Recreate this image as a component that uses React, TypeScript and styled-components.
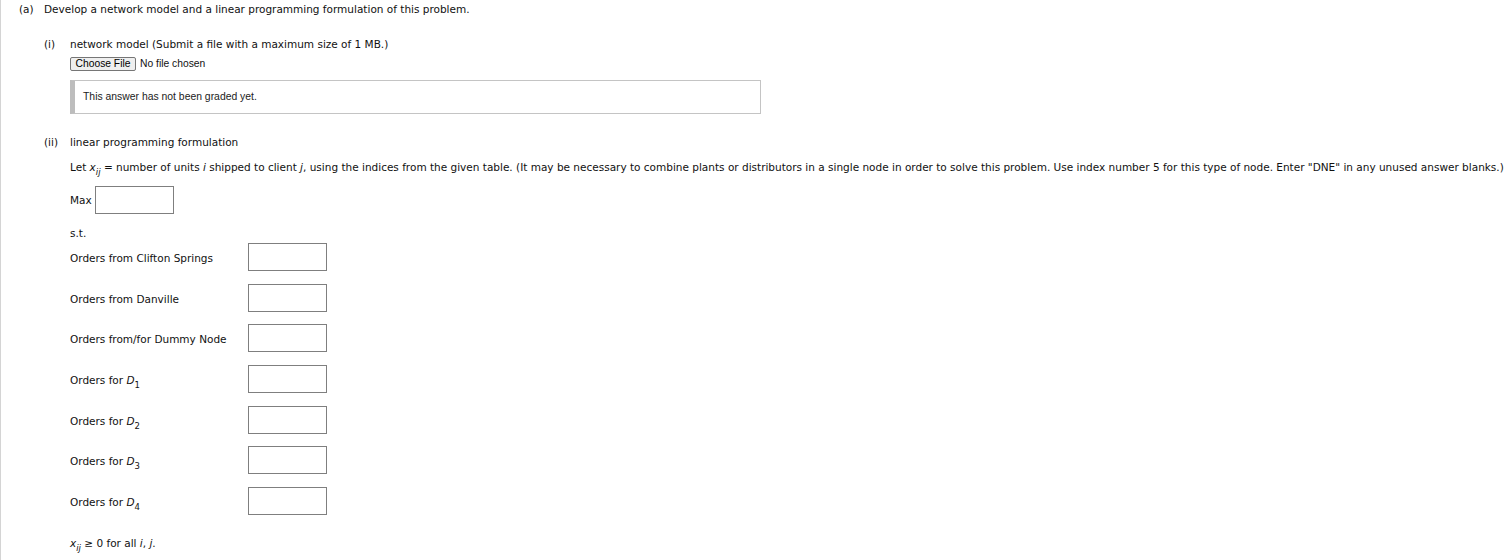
import styled, { createGlobalStyle } from "styled-components";

const GlobalStyle = createGlobalStyle`
  html, body {
    margin: 0;
    padding: 0;
    background: #ffffff;
  }
  body {
    font-family: "DejaVu Sans", Verdana, sans-serif;
    font-size: 10.5px;
    color: #111111;
  }
`;

const Page = styled.div`
  min-height: 560px;
  box-sizing: border-box;
  border-left: 1px solid #d4d4d4;
  padding: 2px 0 0 18px;
`;

const PartRow = styled.div`
  display: flex;
  line-height: 14px;
`;

const PartLabel = styled.span<{ $width: number }>`
  width: ${({ $width }) => $width}px;
  flex: none;
`;

const PartBody = styled.div`
  display: flex;
  flex-direction: column;
`;

const SubPart = styled.div<{ $top: number }>`
  display: flex;
  margin-top: ${({ $top }) => $top}px;
  line-height: 14px;
`;

const Line = styled.div<{ $top?: number }>`
  margin-top: ${({ $top }) => $top ?? 0}px;
  line-height: 14px;
  white-space: nowrap;
`;

const FileRow = styled.div`
  display: flex;
  align-items: center;
  gap: 4px;
  margin-top: 6px;
  font-family: "Liberation Sans", Arial, sans-serif;
  font-size: 10.3px;
`;

const FileButton = styled.button`
  font-family: "Liberation Sans", Arial, sans-serif;
  font-size: 10.3px;
  height: 14px;
  width: 66px;
  padding: 0;
  background: #efefef;
  border: 1px solid #767676;
  border-radius: 2px;
  color: #000;
  line-height: 12px;
`;

const GradeBox = styled.div`
  margin-top: 9px;
  width: 691px;
  height: 34px;
  box-sizing: border-box;
  border: 1px solid #c4c4c4;
  border-left: 5px solid #bdbdbd;
  display: flex;
  align-items: center;
  padding-left: 8px;
  font-family: "Liberation Sans", Arial, sans-serif;
  font-size: 10.4px;
  color: #222;
`;

const Var = styled.i`
  font-style: italic;
`;

const Sub = styled.sub`
  font-size: 8.5px;
  line-height: 0;
  vertical-align: -4px;
`;

const MaxRow = styled.div`
  display: flex;
  align-items: center;
  gap: 3px;
  margin-top: 12px;
  line-height: 14px;
`;

const AnswerBox = styled.input`
  width: 79px;
  height: 28px;
  box-sizing: border-box;
  border: 1px solid #7f7f7f;
  border-radius: 0;
  padding: 0 3px;
  margin: 0;
  background: #fff;
  font: inherit;
`;

const ConstraintGrid = styled.div`
  display: grid;
  grid-template-columns: 178px 79px;
  grid-auto-rows: 28px;
  row-gap: 12.67px;
  margin-top: 3px;
  align-items: center;
`;

const ConstraintLabel = styled.span`
  line-height: 14px;
  padding-top: 2px;
`;

const constraints: { text: string; d?: number }[] = [
  { text: "Orders from Clifton Springs" },
  { text: "Orders from Danville" },
  { text: "Orders from/for Dummy Node" },
  { text: "Orders for ", d: 1 },
  { text: "Orders for ", d: 2 },
  { text: "Orders for ", d: 3 },
  { text: "Orders for ", d: 4 },
];

const Xij = () => (
  <>
    <Var>x</Var>
    <Sub>
      <Var>ij</Var>
    </Sub>
  </>
);

export default function App() {
  return (
    <>
      <GlobalStyle />
      <Page>
        <PartRow>
          <PartLabel $width={25}>(a)</PartLabel>
          <PartBody>
            <span>
              Develop a network model and a linear programming formulation of this problem.
            </span>

            <SubPart $top={21}>
              <PartLabel $width={26}>(i)</PartLabel>
              <PartBody>
                <span>network model (Submit a file with a maximum size of 1 MB.)</span>
                <FileRow>
                  <FileButton type="button">Choose File</FileButton>
                  <span>No file chosen</span>
                </FileRow>
                <GradeBox>This answer has not been graded yet.</GradeBox>
              </PartBody>
            </SubPart>

            <SubPart $top={21}>
              <PartLabel $width={26}>(ii)</PartLabel>
              <PartBody>
                <span>linear programming formulation</span>
                <Line $top={11}>
                  Let <Xij /> = number of units <Var>i</Var> shipped to client <Var>j</Var>, using the
                  indices from the given table. (It may be necessary to combine plants or distributors
                  in a single node in order to solve this problem. Use index number 5 for this type of
                  node. Enter "DNE" in any unused answer blanks.)
                </Line>
                <MaxRow>
                  <span>Max</span>
                  <AnswerBox type="text" />
                </MaxRow>
                <Line $top={12}>s.t.</Line>
                <ConstraintGrid>
                  {constraints.map((c, i) => (
                    <>
                      <ConstraintLabel key={`l${i}`}>
                        {c.text}
                        {c.d ? (
                          <>
                            <Var>D</Var>
                            <Sub>{c.d}</Sub>
                          </>
                        ) : null}
                      </ConstraintLabel>
                      <AnswerBox key={`b${i}`} type="text" />
                    </>
                  ))}
                </ConstraintGrid>
                <Line $top={21}>
                  <Xij /> ≥ 0 for all <Var>i</Var>, <Var>j</Var>.
                </Line>
              </PartBody>
            </SubPart>
          </PartBody>
        </PartRow>
      </Page>
    </>
  );
}
